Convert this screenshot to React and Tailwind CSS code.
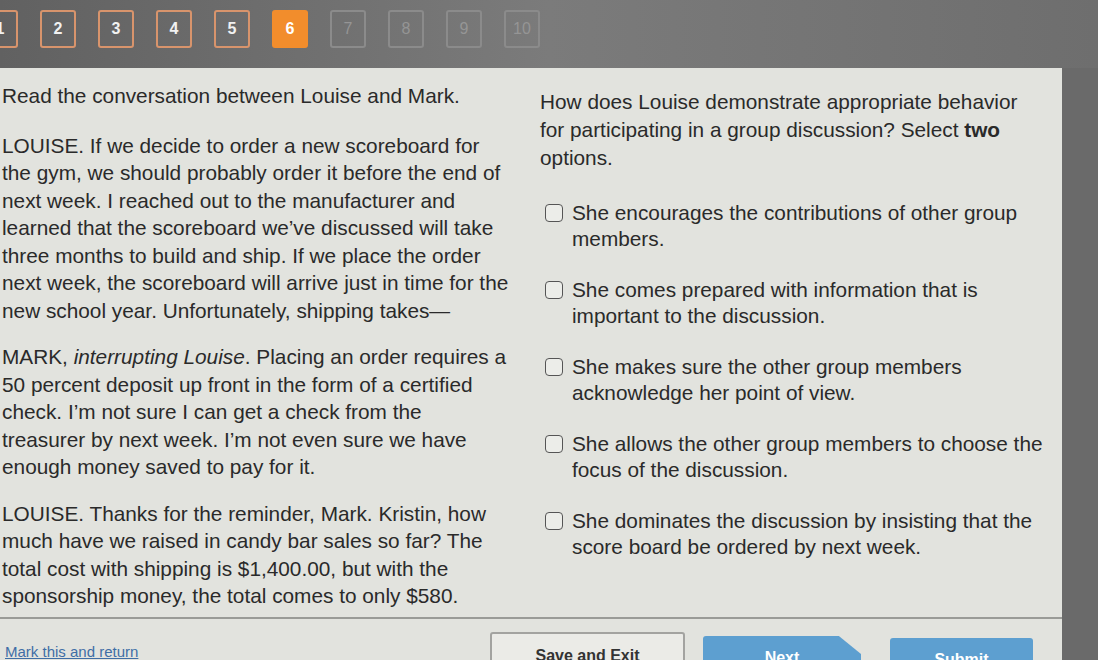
import React from 'react';

const questions = [
  { n: 1, state: 'done' },
  { n: 2, state: 'done' },
  { n: 3, state: 'done' },
  { n: 4, state: 'done' },
  { n: 5, state: 'done' },
  { n: 6, state: 'current' },
  { n: 7, state: 'todo' },
  { n: 8, state: 'todo' },
  { n: 9, state: 'todo' },
  { n: 10, state: 'todo' },
];

const options = [
  ['She encourages the contributions of other group', 'members.'],
  ['She comes prepared with information that is', 'important to the discussion.'],
  ['She makes sure the other group members', 'acknowledge her point of view.'],
  ['She allows the other group members to choose the', 'focus of the discussion.'],
  ['She dominates the discussion by insisting that the', 'score board be ordered by next week.'],
];

function QButton({ n, state }) {
  const base = 'w-[36px] h-[38px] shrink-0 rounded-[3px] flex items-center justify-center text-[16px]';
  if (state === 'current') {
    return <div className={`${base} bg-[#f28d2c] text-white font-bold`}>{n}</div>;
  }
  if (state === 'done') {
    return <div className={`${base} border-2 border-[#d8946c] text-[#f1f1f1] font-bold`}>{n}</div>;
  }
  return <div className={`${base} border-2 border-[#8b8b8b] text-[#959595] text-[13px]`}>{n}</div>;
}

function Lines({ lines, className = '' }) {
  return (
    <div className={className}>
      {lines.map((l, i) => (
        <span key={i} className="block whitespace-nowrap">{l}</span>
      ))}
    </div>
  );
}

export default function App() {
  return (
    <div
      className="w-[1098px] h-[660px] overflow-hidden flex flex-col bg-linear-to-r from-[#616161] via-[#7b7b7b] to-[#6e6e6e] text-[#2a2a2a]"
      style={{ fontFamily: '"Liberation Sans", Arial, sans-serif' }}
    >
      {/* question navigator */}
      <div className="h-[68px] shrink-0 flex items-start pt-[10px] gap-[22px] -ml-[18px]">
        {questions.map(q => <QButton key={q.n} {...q} />)}
      </div>

      <div className="flex-1 flex">
        <div className="w-[1062px] bg-[#e2e3de] flex flex-col">
          <div className="flex-1 flex text-[20.8px]">
            {/* passage */}
            <div className="w-[540px] shrink-0 pl-[2px] pt-[14px] leading-[27.5px]">
              <p className="mb-[22px]">Read the conversation between Louise and Mark.</p>
              <Lines
                className="mb-[19px]"
                lines={[
                  'LOUISE. If we decide to order a new scoreboard for',
                  'the gym, we should probably order it before the end of',
                  'next week. I reached out to the manufacturer and',
                  'learned that the scoreboard we\u2019ve discussed will take',
                  'three months to build and ship. If we place the order',
                  'next week, the scoreboard will arrive just in time for the',
                  'new school year. Unfortunately, shipping takes\u2014',
                ]}
              />
              <Lines
                className="mb-[19px]"
                lines={[
                  <>MARK, <i>interrupting Louise</i>. Placing an order requires a</>,
                  '50 percent deposit up front in the form of a certified',
                  'check. I\u2019m not sure I can get a check from the',
                  'treasurer by next week. I\u2019m not even sure we have',
                  'enough money saved to pay for it.',
                ]}
              />
              <Lines
                lines={[
                  'LOUISE. Thanks for the reminder, Mark. Kristin, how',
                  'much have we raised in candy bar sales so far? The',
                  'total cost with shipping is $1,400.00, but with the',
                  'sponsorship money, the total comes to only $580.',
                ]}
              />
            </div>

            {/* question */}
            <div className="flex-1 pt-[20px]">
              <Lines
                className="leading-[28px] mb-[28px]"
                lines={[
                  'How does Louise demonstrate appropriate behavior',
                  <>for participating in a group discussion? Select <b>two</b></>,
                  'options.',
                ]}
              />
              <div className="flex flex-col gap-[25px]">
                {options.map((o, i) => (
                  <div key={i} className="flex items-start">
                    <span className="mt-[4px] ml-[5px] mr-[9px] w-[18px] h-[18px] shrink-0 rounded-[4px] border-[1.5px] border-[#555] bg-[#ecede9]" />
                    <Lines className="leading-[26px]" lines={o} />
                  </div>
                ))}
              </div>
            </div>
          </div>

          {/* footer */}
          <div className="h-[43px] shrink-0 border-t-2 border-[#9a9b97] relative">
            <a className="absolute left-[5px] bottom-[1px] text-[15px] text-[#3f6ea6] underline leading-none">
              Mark this and return
            </a>
            <div className="absolute left-[490px] top-[13px] w-[195px] h-[40px] rounded-[3px] border-2 border-[#a3a3a0] bg-[#ebebe7] flex justify-center pt-[10px] text-[16px] font-bold text-[#333]">
              Save and Exit
            </div>
            <div className="absolute left-[703px] top-[17px] w-[158px] h-[40px] bg-[#5d9fd0] [clip-path:polygon(0_0,86%_0,100%_45%,100%_100%,0_100%)] rounded-l-[3px] flex justify-center pt-[10px] text-[16px] font-bold text-white">
              Next
            </div>
            <div className="absolute left-[890px] top-[19px] w-[143px] h-[40px] rounded-[3px] bg-[#5d9fd0] flex justify-center pt-[10px] text-[16px] font-bold text-white">
              Submit
            </div>
          </div>
        </div>
        <div className="flex-1 bg-[#6a6a6a]" />
      </div>
    </div>
  );
}
